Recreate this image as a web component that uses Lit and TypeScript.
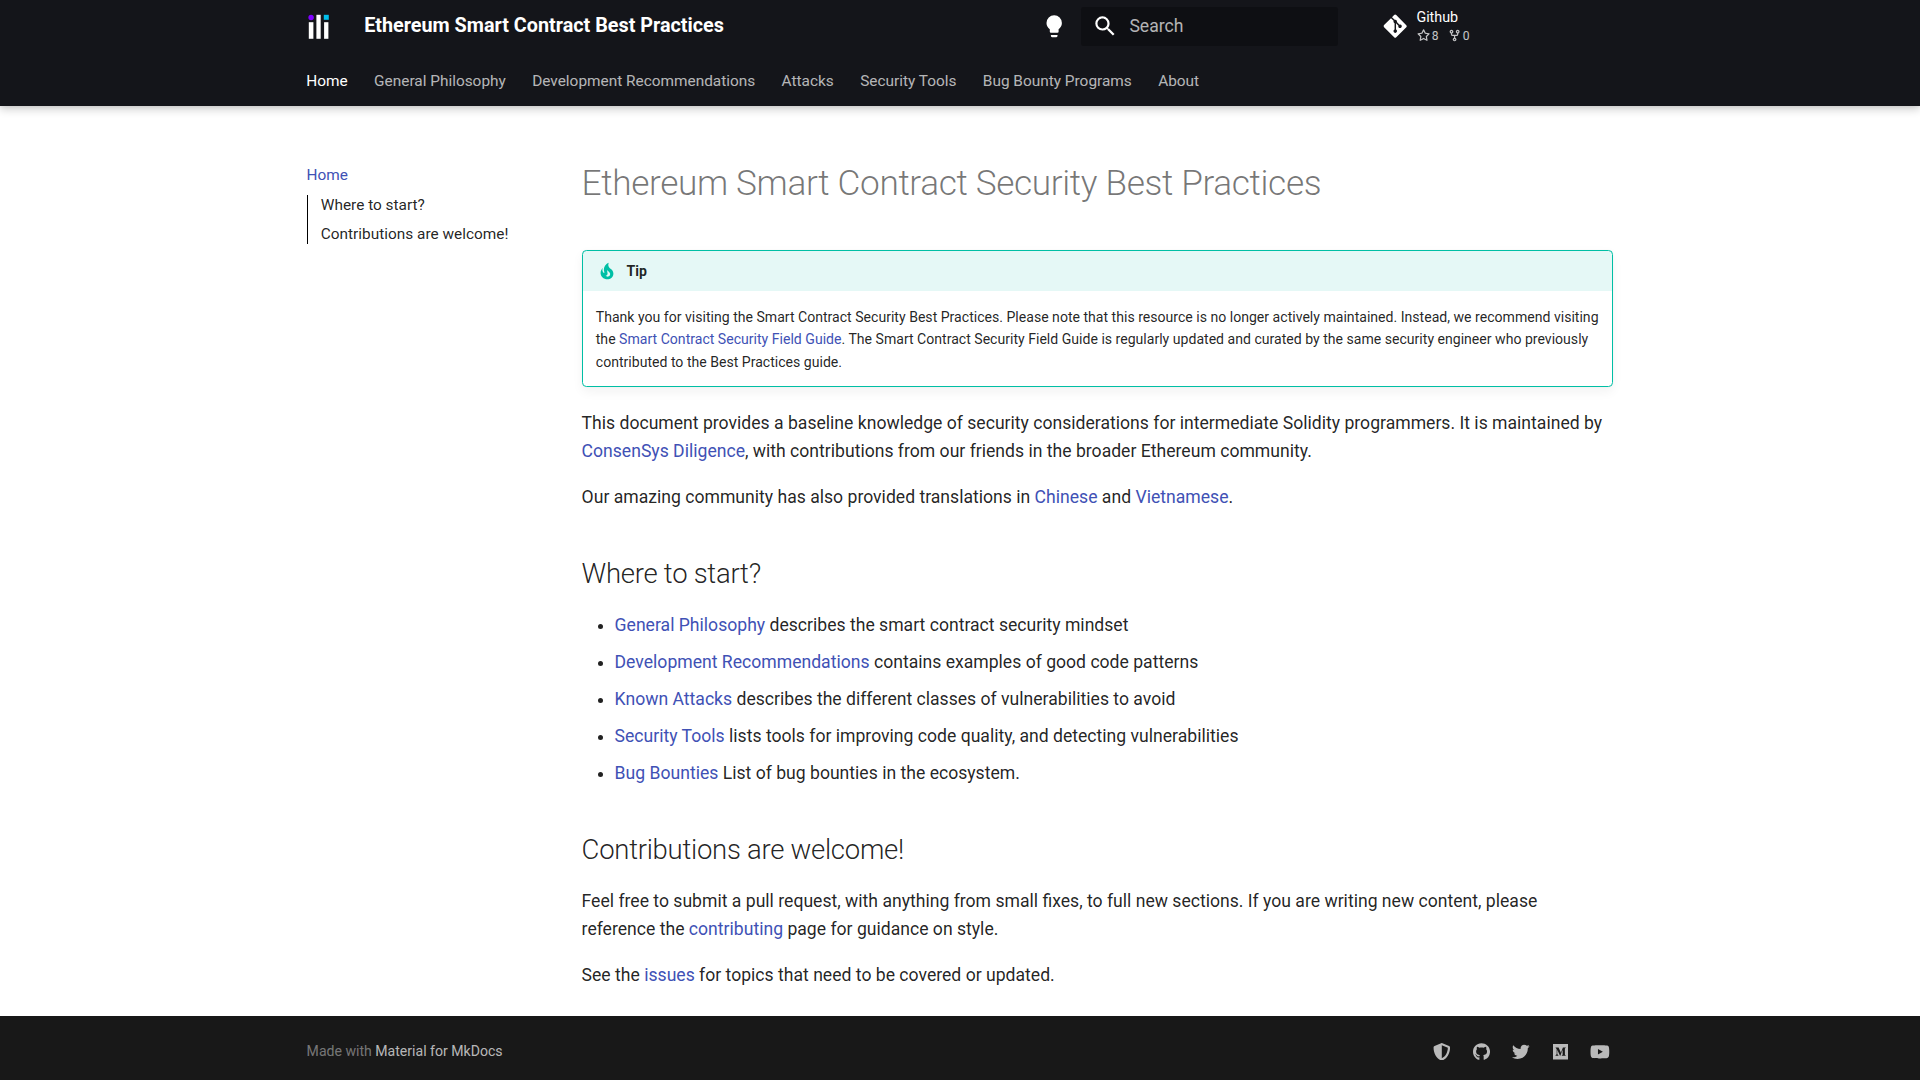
import { LitElement, html, css, svg } from "lit";
import { customElement } from "lit/decorators.js";

const icon = (box: string, d: string) =>
  html`<svg viewBox=${box}>${svg`<path d=${d}></path>`}</svg>`;

const bulb = icon("0 0 24 24", "M12 2a7 7 0 0 0-7 7c0 2.38 1.19 4.47 3 5.74V17a1 1 0 0 0 1 1h6a1 1 0 0 0 1-1v-2.26c1.81-1.27 3-3.36 3-5.74a7 7 0 0 0-7-7M9 21a1 1 0 0 0 1 1h4a1 1 0 0 0 1-1v-1H9v1z");
const magnify = icon("0 0 24 24", "M9.5 3A6.5 6.5 0 0 1 16 9.5c0 1.61-.59 3.09-1.56 4.23l.27.27h.79l5 5-1.5 1.5-5-5v-.79l-.27-.27A6.516 6.516 0 0 1 9.5 16 6.5 6.5 0 0 1 3 9.5 6.5 6.5 0 0 1 9.5 3m0 2C7 5 5 7 5 9.5S7 14 9.5 14 14 12 14 9.5 12 5 9.5 5z");
const git = icon("0 0 448 512", "M439.55 236.05 244 40.45a28.87 28.87 0 0 0-40.81 0l-40.66 40.63 51.52 51.52c27.06-9.14 52.68 16.77 43.39 43.68l49.66 49.66c34.23-11.8 61.18 31 35.47 56.69-26.49 26.49-70.21-2.87-56-37.34L240.22 199v121.85c25.3 12.54 22.26 41.85 9.08 55a34.34 34.34 0 0 1-48.55 0c-17.57-17.6-11.07-46.91 11.25-56v-123c-20.8-8.51-24.6-30.74-18.64-45L142.57 101 8.45 235.14a28.86 28.86 0 0 0 0 40.81l195.61 195.6a28.86 28.86 0 0 0 40.8 0l194.69-194.69a28.86 28.86 0 0 0 0-40.81z");
const star = icon("0 0 16 16", "M8 .25a.75.75 0 0 1 .673.418l1.882 3.815 4.21.612a.75.75 0 0 1 .416 1.279l-3.046 2.97.719 4.192a.751.751 0 0 1-1.088.791L8 12.347l-3.766 1.98a.75.75 0 0 1-1.088-.79l.72-4.194L.818 6.374a.75.75 0 0 1 .416-1.28l4.21-.611L7.327.668A.75.75 0 0 1 8 .25Zm0 2.445L6.615 5.5a.75.75 0 0 1-.564.41l-3.097.45 2.24 2.184a.75.75 0 0 1 .216.664l-.528 3.084 2.769-1.456a.75.75 0 0 1 .698 0l2.77 1.456-.53-3.084a.75.75 0 0 1 .216-.664l2.24-2.183-3.096-.45a.75.75 0 0 1-.564-.41L8 2.694Z");
const fork = icon("0 0 16 16", "M5 5.372v.878c0 .414.336.75.75.75h4.5a.75.75 0 0 0 .75-.75v-.878a2.25 2.25 0 1 1 1.5 0v.878a2.25 2.25 0 0 1-2.25 2.25h-1.5v2.128a2.251 2.251 0 1 1-1.5 0V8.5h-1.5A2.25 2.25 0 0 1 3.5 6.25v-.878a2.25 2.25 0 1 1 1.5 0ZM5 3.25a.75.75 0 1 0-1.5 0 .75.75 0 0 0 1.5 0Zm6.75.75a.75.75 0 1 0 0-1.5.75.75 0 0 0 0 1.5Zm-3 8.75a.75.75 0 1 0-1.5 0 .75.75 0 0 0 1.5 0Z");
const fire = icon("0 0 24 24", "M17.66 11.2c-.23-.3-.51-.56-.77-.82-.67-.6-1.43-1.03-2.07-1.66C13.33 7.26 13 4.85 13.95 3c-.95.23-1.78.75-2.49 1.32-2.59 2.08-3.61 5.75-2.39 8.9.04.1.08.2.08.33 0 .22-.15.42-.35.5-.23.1-.47.04-.66-.12a.58.58 0 0 1-.14-.17c-1.13-1.43-1.31-3.48-.55-5.12C5.78 10 4.87 12.3 5 14.47c.06.5.12 1 .29 1.5.14.6.41 1.2.71 1.73 1.08 1.73 2.95 2.97 4.96 3.22 2.14.27 4.43-.12 6.07-1.6 1.83-1.66 2.47-4.32 1.53-6.6l-.13-.26c-.21-.46-.77-1.26-.77-1.26m-3.16 6.3c-.28.24-.74.5-1.1.6-1.12.4-2.24-.16-2.9-.82 1.19-.28 1.9-1.16 2.11-2.05.17-.8-.15-1.46-.28-2.23-.12-.74-.1-1.37.17-2.06.19.38.39.76.63 1.06.77 1 1.98 1.44 2.24 2.8.04.14.06.28.06.43.03.82-.33 1.72-.93 2.27z");

const social = [
  icon("0 0 512 512", "M466.5 83.7l-192-80a48.15 48.15 0 0 0-36.9 0l-192 80C27.7 91.1 16 108.6 16 128c0 198.5 114.5 335.7 221.5 380.3 11.8 4.9 25.1 4.9 36.9 0C360.1 472.6 496 349.3 496 128c0-19.4-11.7-36.9-29.5-44.3zM256.1 446.3l-.1-381 175.9 73.3c-3.3 151.4-82.1 261.1-175.8 307.7z"),
  icon("0 0 496 512", "M165.9 397.4c0 2-2.3 3.6-5.2 3.6-3.3.3-5.6-1.3-5.6-3.6 0-2 2.3-3.6 5.2-3.6 3-.3 5.6 1.3 5.6 3.6zm-31.1-4.5c-.7 2 1.3 4.3 4.3 4.9 2.6 1 5.6 0 6.2-2s-1.3-4.3-4.3-5.2c-2.6-.7-5.5.3-6.2 2.3zm44.2-1.7c-2.9.7-4.9 2.6-4.6 4.9.3 2 2.9 3.3 5.9 2.6 2.9-.7 4.9-2.6 4.6-4.6-.3-1.9-3-3.2-5.9-2.9zM244.8 8C106.1 8 0 113.3 0 252c0 110.9 69.8 205.8 169.5 239.2 12.8 2.3 17.3-5.6 17.3-12.1 0-6.2-.3-40.4-.3-61.4 0 0-70 15-84.7-29.8 0 0-11.4-29.1-27.8-36.6 0 0-22.9-15.7 1.6-15.4 0 0 24.9 2 38.6 25.8 21.9 38.6 58.6 27.5 72.9 20.9 2.3-16 8.8-27.1 16-33.7-55.9-6.2-112.3-14.3-112.3-110.5 0-27.5 7.6-41.3 23.6-58.9-2.6-6.5-11.1-33.3 2.6-67.9 20.9-6.5 69 27 69 27 20-5.6 41.5-8.5 62.8-8.5s42.8 2.9 62.8 8.5c0 0 48.1-33.6 69-27 13.7 34.7 5.2 61.4 2.6 67.9 16 17.7 25.8 31.5 25.8 58.9 0 96.5-58.9 104.2-114.8 110.5 9.2 7.9 17 22.9 17 46.4 0 33.7-.3 75.4-.3 83.6 0 6.5 4.6 14.4 17.3 12.1C428.2 457.8 496 362.9 496 252 496 113.3 383.5 8 244.8 8z"),
  icon("0 0 512 512", "M459.37 151.716c.325 4.548.325 9.097.325 13.645 0 138.72-105.583 298.558-298.558 298.558-59.452 0-114.68-17.219-161.137-47.106 8.447.974 16.568 1.299 25.34 1.299 49.055 0 94.213-16.568 130.274-44.832-46.132-.975-84.792-31.188-98.112-72.772 6.498.974 12.995 1.624 19.818 1.624 9.421 0 18.843-1.3 27.614-3.573-48.081-9.747-84.143-51.98-84.143-102.985v-1.299c13.969 7.797 30.214 12.67 47.431 13.319-28.264-18.843-46.781-51.005-46.781-87.391 0-19.492 5.197-37.36 14.294-52.954 51.655 63.675 129.3 105.258 216.365 109.807-1.624-7.797-2.599-15.918-2.599-24.04 0-57.828 46.782-104.934 104.934-104.934 30.213 0 57.502 12.67 76.67 33.137 23.715-4.548 46.456-13.32 66.599-25.34-7.798 24.366-24.366 44.833-46.132 57.827 21.117-2.273 41.584-8.122 60.426-16.243-14.292 20.791-32.161 39.308-52.628 54.253z"),
  icon("0 0 448 512", "M0 32v448h448V32H0zm372.2 106.1l-24 23c-2.1 1.6-3.1 4.2-2.7 6.7v169.3c-.4 2.6.6 5.2 2.7 6.7l23.5 23v5.1h-118V367l24.3-23.6c2.4-2.4 2.4-3.1 2.4-6.7V199.8l-67.6 171.6h-9.1L125 199.8v115c-.7 4.8 1 9.7 4.4 13.2l31.6 38.3v5.1H71.2v-5.1l31.6-38.3c3.4-3.5 4.9-8.4 4.1-13.2v-133c.4-3.7-1-7.3-3.8-9.8L75 138.1V133h87.3l67.4 148L289 133.1h83.3v5z"),
  icon("0 0 576 512", "M549.655 124.083c-6.281-23.65-24.787-42.276-48.284-48.597C458.781 64 288 64 288 64S117.22 64 74.629 75.486c-23.497 6.322-42.003 24.947-48.284 48.597-11.412 42.867-11.412 132.305-11.412 132.305s0 89.438 11.412 132.305c6.281 23.65 24.787 41.5 48.284 47.821C117.22 448 288 448 288 448s170.78 0 213.371-11.486c23.497-6.321 42.003-24.171 48.284-47.821 11.412-42.867 11.412-132.305 11.412-132.305s0-89.438-11.412-132.305zm-317.51 213.508V175.185l142.739 81.205-142.739 81.201z"),
];

const tabs = ["Home", "General Philosophy", "Development Recommendations", "Attacks", "Security Tools", "Bug Bounty Programs", "About"];

const starts = [
  ["General Philosophy", "describes the smart contract security mindset"],
  ["Development Recommendations", "contains examples of good code patterns"],
  ["Known Attacks", "describes the different classes of vulnerabilities to avoid"],
  ["Security Tools", "lists tools for improving code quality, and detecting vulnerabilities"],
  ["Bug Bounties", "List of bug bounties in the ecosystem."],
];

@customElement("app-root")
export class AppRoot extends LitElement {
  static styles = css`
    :host {
      display: flex;
      flex-direction: column;
      min-height: 100vh;
      background: #fff;
      color: rgba(0, 0, 0, 0.87);
      font-family: Roboto, "Liberation Sans", sans-serif;
      font-size: 11px;
      line-height: normal;
      font-kerning: normal;
      -webkit-font-smoothing: antialiased;
    }
    * { box-sizing: border-box; }
    svg { display: block; fill: currentColor; }
    a { color: #4051b5; text-decoration: none; }
    .grid { width: 1342px; margin: 0 auto; }
    .top {
      background: #14151a;
      color: #fff;
      box-shadow: 0 0 4.4px rgba(0, 0, 0, 0.1), 0 4.4px 8.8px rgba(0, 0, 0, 0.2);
      height: 105.6px;
    }
    .bar { display: flex; align-items: center; height: 52.8px; padding: 0 4.4px; }
    .logo { margin: 4.4px; padding: 8.8px; }
    .logo svg { width: 22.4px; height: 26.4px; }
    .title {
      flex: 1;
      margin-left: 22px;
      margin-right: 8.8px;
      font-size: 19.8px;
      font-weight: 700;
      line-height: 52.8px;
      height: 52.8px;
      padding-bottom: 1px;
    }
    .button { margin: 4.4px; padding: 8.8px; }
    .button svg { width: 26.4px; height: 26.4px; }
    .search {
      display: flex;
      align-items: center;
      width: 257.4px;
      height: 39.6px;
      padding-left: 11px;
      gap: 11px;
      border-radius: 2.2px;
      background: rgba(0, 0, 0, 0.26);
      font-size: 17.6px;
    }
    .search svg { width: 26.4px; height: 26.4px; }
    .search span { color: rgba(255, 255, 255, 0.7); }
    .source {
      display: flex;
      align-items: center;
      width: 257.4px;
      margin-left: 30.8px;
      padding-left: 13.2px;
      font-size: 14.3px;
      line-height: 17.16px;
    }
    .source > svg { width: 26.4px; height: 26.4px; }
    .repo { margin-left: 7.6px; }
    .facts {
      display: flex;
      gap: 8.8px;
      margin-top: 2.2px;
      font-size: 12.1px;
      line-height: 14.5px;
      opacity: 0.75;
    }
    .fact { display: flex; align-items: center; gap: 1.6px; }
    .fact svg { width: 13.2px; height: 13.2px; margin-left: 0.6px; }
    .tabs { display: flex; padding-left: 4.1px; font-size: 15.4px; height: 52.8px; }
    .tab { padding: 0 13.2px; margin-top: 19.2px; line-height: 18px; color: rgba(255, 255, 255, 0.7); }
    .tab.on { color: #fff; }
    .main { display: flex; flex: 1; padding-top: 33px; }
    .side { width: 266.2px; padding: 26.4px 17.6px; font-size: 15.4px; line-height: 20.02px; }
    .side a { display: block; }
    .toc {
      margin-top: 10px;
      border-left: 1px solid #000;
      padding-left: 13.2px;
      display: flex;
      flex-direction: column;
      gap: 8.8px;
    }
    .toc a { color: rgba(0, 0, 0, 0.87); }
    .article { flex: 1; margin: 0 17.6px 0 26.4px; padding-top: 22px; font-size: 17.6px; line-height: 1.6; }
    h1 {
      margin: 0 0 44px;
      font-size: 35.2px;
      font-weight: 300;
      line-height: 1.3;
      letter-spacing: -0.01em;
      color: rgba(0, 0, 0, 0.54);
    }
    h2 { margin: 44px 0 17.6px; font-size: 27.5px; font-weight: 300; line-height: 1.4; letter-spacing: -0.01em; }
    p { margin: 17.6px 0; }
    ul { margin: 17.6px 0; padding: 0 0 0 11px; }
    li { margin: 0 0 8.8px 22px; }
    li:last-child { margin-bottom: 0; }
    .tip {
      margin: 22px 0 21.9px;
      padding: 0 13.2px;
      border: 1px solid #00bfa5;
      border-radius: 4.4px;
      box-shadow: 0 4.4px 11px rgba(0, 0, 0, 0.05), 0 0 1px rgba(0, 0, 0, 0.1);
      font-size: 14.08px;
    }
    .tip-title {
      display: flex;
      align-items: flex-start;
      gap: 8.8px;
      margin: 0 -13.2px;
      padding: 8.8px 13.2px;
      background: rgba(0, 191, 165, 0.1);
      font-weight: 700;
    }
    .tip-title svg { width: 22px; height: 22px; color: #00bfa5; }
    .tip p { margin: 14.08px 0 13.2px; }
    .tip-title span { line-height: 22.53px; }
    .foot { background: #181818; }
    .meta { display: flex; justify-content: space-between; align-items: center; height: 64px; padding: 0 17.6px; }
    .made { font-size: 14.08px; color: rgba(255, 255, 255, 0.42); padding-top: 6px; }
    .made a { color: rgba(255, 255, 255, 0.7); }
    .social { display: flex; gap: 4.3px; margin-right: -4.4px; padding-top: 13px; }
    .social a { display: flex; justify-content: center; width: 35.2px; height: 24px; color: rgba(255, 255, 255, 0.7); }
    .social svg { height: 17.6px; }
  `;

  render() {
    return html`
      <header class="top">
        <div class="bar grid">
          <a class="logo">
            <svg viewBox="0 0 22.4 26.4">
              <circle cx="4.1" cy="4.5" r="2.7" fill="#8000ff"></circle>
              <rect x="1.8" y="9.2" width="4.6" height="16.6" fill="#fff"></rect>
              <rect x="9.4" y="1.8" width="4.3" height="24" fill="#fff"></rect>
              <rect x="16.8" y="1.8" width="5" height="5" fill="#00bfec"></rect>
              <rect x="17.1" y="9.2" width="4.3" height="16.6" fill="#fff"></rect>
            </svg>
          </a>
          <div class="title">Ethereum Smart Contract Best Practices</div>
          <div class="button">${bulb}</div>
          <div class="search">${magnify}<span>Search</span></div>
          <div class="source">
            ${git}
            <div class="repo">
              <div>Github</div>
              <div class="facts">
                <div class="fact">${star}<span>8</span></div>
                <div class="fact">${fork}<span>0</span></div>
              </div>
            </div>
          </div>
        </div>
        <nav class="tabs grid">
          ${tabs.map((t, i) => html`<a class=${i ? "tab" : "tab on"}>${t}</a>`)}
        </nav>
      </header>
      <div class="main grid">
        <nav class="side">
          <a>Home</a>
          <div class="toc"><a>Where to start?</a><a>Contributions are welcome!</a></div>
        </nav>
        <article class="article">
          <h1>Ethereum Smart Contract Security Best Practices</h1>
          <div class="tip">
            <div class="tip-title">${fire}<span>Tip</span></div>
            <p>Thank you for visiting the Smart Contract Security Best Practices. Please note that this resource is no longer actively maintained. Instead, we recommend visiting the <a>Smart Contract Security Field Guide</a>. The Smart Contract Security Field Guide is regularly updated and curated by the same security engineer who previously contributed to the Best Practices guide.</p>
          </div>
          <p>This document provides a baseline knowledge of security considerations for intermediate Solidity programmers. It is maintained by <a>ConsenSys Diligence</a>, with contributions from our friends in the broader Ethereum community.</p>
          <p>Our amazing community has also provided translations in <a>Chinese</a> and <a>Vietnamese</a>.</p>
          <h2>Where to start?</h2>
          <ul>
            ${starts.map(([a, b]) => html`<li><a>${a}</a> ${b}</li>`)}
          </ul>
          <h2>Contributions are welcome!</h2>
          <p>Feel free to submit a pull request, with anything from small fixes, to full new sections. If you are writing new content, please reference the <a>contributing</a> page for guidance on style.</p>
          <p>See the <a>issues</a> for topics that need to be covered or updated.</p>
        </article>
      </div>
      <footer class="foot">
        <div class="meta grid">
          <div class="made">Made with <a>Material for MkDocs</a></div>
          <div class="social">${social.map((s) => html`<a>${s}</a>`)}</div>
        </div>
      </footer>
    `;
  }
}
